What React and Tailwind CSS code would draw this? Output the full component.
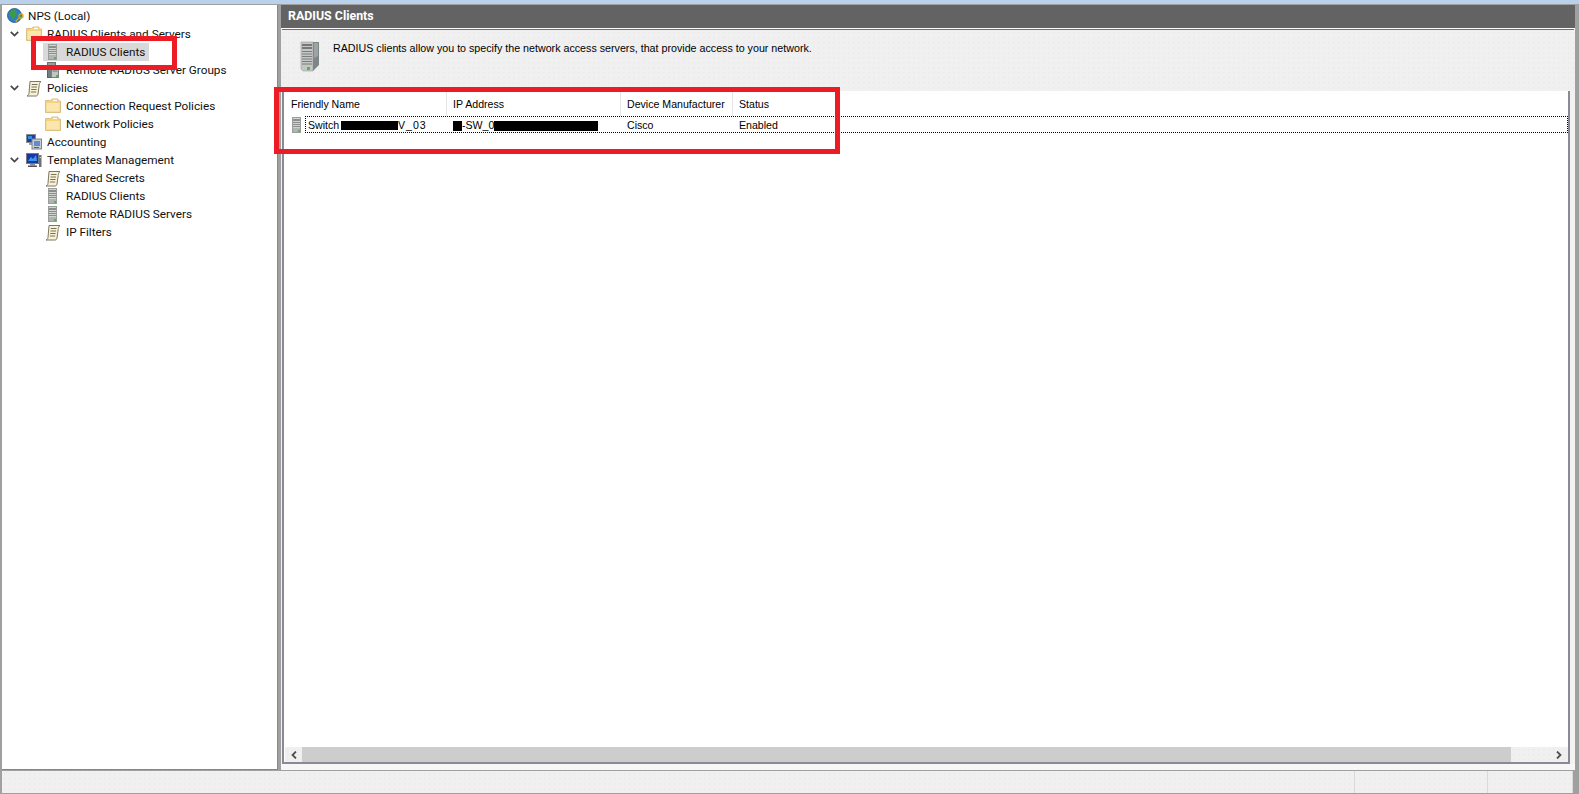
const Chevron = () => (
  <svg width="9" height="6" viewBox="0 0 9 6" className="shrink-0">
    <path d="M0.8 0.8 L4.5 4.5 L8.2 0.8" fill="none" stroke="#454545" strokeWidth="1.7" />
  </svg>
);

const Folder = () => (
  <svg width="16" height="16" viewBox="0 0 16 16" className="shrink-0">
    <path d="M0.5 2.5 H5.5 L7 1 H13 V3 H15.5 V14.5 H0.5 Z" fill="#f4d27e" stroke="#dcc084" strokeWidth="1" />
    <path d="M1.5 5 H14.5 V13.5 H1.5 Z" fill="#fbe7ae" />
    <path d="M8 1.8 H12 V3 H8 Z" fill="#ffffff" />
  </svg>
);

const Scroll = () => (
  <svg width="16" height="17" viewBox="0 0 16 17" className="shrink-0">
    <path d="M4 1.5 H15 C13.6 2.5 13.4 4 13.2 5.5 L12 14 C11.7 15.5 11 16 10 16 H1 C2.4 15.5 2.8 14.5 3 13.5 Z" fill="#f8f1d4" stroke="#7d7862" strokeWidth="1" />
    <path d="M5.8 4.5 H11.5 M5.5 7 H11 M5.2 9.5 H10.6 M4.9 12 H10.2" stroke="#77725e" strokeWidth="1" />
  </svg>
);

const Server = ({ w = 9, h = 16 }) => (
  <svg width={w} height={h} viewBox="0 0 9 16" className="shrink-0" preserveAspectRatio="none">
    <rect x="0.5" y="0.5" width="8" height="15" fill="#d2d4d2" stroke="#9b9d9b" strokeWidth="1" />
    <path d="M1 3 H8" stroke="#5d605f" strokeWidth="1.2" />
    <path d="M1 5.5 H8 M1 7.5 H8 M1 9.5 H8" stroke="#8a8d8c" strokeWidth="1" />
    <rect x="1" y="11" width="7" height="4" fill="#b2b4b3" />
    <rect x="6" y="13" width="2" height="2" fill="#4dbb4a" />
  </svg>
);

const BigServer = () => (
  <svg width="20" height="31" viewBox="0 0 20 31" className="shrink-0">
    <path d="M1 1 H13 V30 H3 L1 28 Z" fill="#c4c7c6" stroke="#9a9d9c" strokeWidth="0.6" />
    <path d="M13 1 H19 V24 L13 30 Z" fill="#7f8686" />
    <path d="M14 2 H18 V15 L14 17 Z" fill="#9ea4a4" />
    <path d="M2 4 H12 M2 7 H12" stroke="#5c5f5e" strokeWidth="1.4" />
    <path d="M2 10.5 H12 M2 13 H12 M2 15.5 H12 M2 18 H12 M2 20.5 H12 M2 23 H12" stroke="#7a7d7c" strokeWidth="1" />
    <rect x="7" y="26" width="3" height="3" fill="#43c23f" />
  </svg>
);

const ServerGroup = () => (
  <svg width="12" height="16" viewBox="0 0 12 16" className="shrink-0">
    <rect x="0.5" y="0.5" width="8" height="6" fill="#9a9c9a" stroke="#6f716f" />
    <rect x="0.5" y="6" width="5" height="9.5" fill="#6f8080" stroke="#5b6262" />
    <rect x="4.5" y="4.5" width="7" height="11" fill="#c4c6c4" stroke="#7e807e" />
    <path d="M5.5 7 H10.5 M5.5 9 H10.5" stroke="#6d706f" />
    <rect x="9" y="13" width="2" height="2" fill="#4dbb4a" />
  </svg>
);

const Globe = () => (
  <svg width="17" height="17" viewBox="0 0 17 17" className="shrink-0">
    <circle cx="7.5" cy="7.5" r="7" fill="#2f7fc4" stroke="#1d4f82" strokeWidth="0.8" />
    <path d="M3 3.5 C5 2 7 1.5 9 2 L8 5 L10 6 L8 9 L6 12 L4.5 9 L2 7 Z" fill="#3f9a46" />
    <path d="M11 9 L13.5 7 L14 10 L12 12 Z" fill="#3f9a46" />
    <circle cx="14" cy="8" r="2" fill="none" stroke="#c9a227" strokeWidth="1.3" />
    <path d="M12.7 9.5 L8.5 13.5 M10 13.5 L9 12.5" stroke="#c9a227" strokeWidth="1.3" />
  </svg>
);

const Accounting = () => (
  <svg width="16" height="16" viewBox="0 0 16 16" className="shrink-0">
    <rect x="0.5" y="0.5" width="9" height="8" fill="#1c3fb0" stroke="#8a8c92" />
    <rect x="2" y="2" width="4" height="3" fill="#2f8fe0" />
    <rect x="3" y="9" width="5" height="2" fill="#9ea0a6" />
    <rect x="6" y="5" width="9.5" height="10" fill="#c9ccd2" stroke="#7f828a" />
    <rect x="8" y="7" width="6" height="5" fill="#5b8fd0" />
    <rect x="8" y="13" width="5" height="1" fill="#5d6068" />
  </svg>
);

const Templates = () => (
  <svg width="16" height="16" viewBox="0 0 16 16" className="shrink-0">
    <rect x="0.5" y="1.5" width="12" height="10" fill="#1a35a8" stroke="#757982" />
    <path d="M2 9 L5 5 L7 7 L10 3 L11 9 Z" fill="#3a9ae8" />
    <rect x="4" y="12" width="5" height="1.5" fill="#8a8d94" />
    <rect x="2" y="13.5" width="9" height="1.5" fill="#4f5259" />
    <rect x="13" y="3" width="2.5" height="12" fill="#6d7078" />
    <rect x="13.7" y="5" width="1.2" height="1" fill="#d8dade" />
  </svg>
);

const Row = ({ level, open, icon, iconPad, label, selected }) => {
  const pad = iconPad === 3 ? "pl-[3px]" : iconPad === 2 ? "pl-[2px]" : "";
  return (
    <div className="flex h-[18px] items-center">
      {level === 0 && <div className="w-[3px] shrink-0" />}
      {level === 1 && (
        <div className="flex w-[22px] shrink-0 items-center pl-[6px]">{open && <Chevron />}</div>
      )}
      {level === 2 && <div className={selected ? "w-[39px] shrink-0" : "w-[41px] shrink-0"} />}
      {selected ? (
        <div className="flex h-[18px] items-center bg-[#d9d9d9] pl-[2px] pr-[4px]">
          <div className={`flex w-[21px] shrink-0 ${pad}`}>{icon}</div>
          <span>{label}</span>
        </div>
      ) : (
        <>
          <div className={`flex w-[21px] shrink-0 ${pad}`}>{icon}</div>
          <span>{label}</span>
        </>
      )}
    </div>
  );
};

const dots = "bg-[radial-gradient(#ebebeb_1px,transparent_1px)] bg-[length:5px_5px]";

export default function App() {
  return (
    <div className="relative flex h-[794px] w-[1579px] flex-col overflow-hidden bg-[#a0a0a0]" style={{ fontFamily: 'Roboto, sans-serif' }}>
      <div className="h-[4px] shrink-0 bg-[#b9d1ea]" />
      <div className="flex h-[767px] shrink-0 gap-[3px] bg-[#a0a0a0] pb-[1px] pl-[2px] pr-[4px] pt-[1px]">
        {/* Tree */}
        <div className="w-[276px] shrink-0 border-b border-r border-[#828790] bg-white pl-[2px] pt-[2px] text-[11.75px] leading-[18px] text-[#111]">
          <Row level={0} icon={<Globe />} label="NPS (Local)" />
          <Row level={1} open icon={<Folder />} label="RADIUS Clients and Servers" />
          <Row level={2} selected iconPad={3} icon={<Server />} label="RADIUS Clients" />
          <Row level={2} iconPad={2} icon={<ServerGroup />} label="Remote RADIUS Server Groups" />
          <Row level={1} open icon={<Scroll />} label="Policies" />
          <Row level={2} icon={<Folder />} label="Connection Request Policies" />
          <Row level={2} icon={<Folder />} label="Network Policies" />
          <Row level={1} icon={<Accounting />} label="Accounting" />
          <Row level={1} open icon={<Templates />} label="Templates Management" />
          <Row level={2} icon={<Scroll />} label="Shared Secrets" />
          <Row level={2} iconPad={3} icon={<Server />} label="RADIUS Clients" />
          <Row level={2} iconPad={3} icon={<Server />} label="Remote RADIUS Servers" />
          <Row level={2} icon={<Scroll />} label="IP Filters" />
        </div>
        {/* Right pane */}
        <div className="flex min-w-0 flex-1 flex-col bg-[#f2f2f2]">
          <div className="flex h-[23px] shrink-0 items-center bg-[#636363] pl-[7px] text-[12.4px] font-bold text-white">
            RADIUS Clients
          </div>
          <div className="h-[1px] shrink-0 bg-white" />
          <div className="mx-[1px] h-[1px] shrink-0 bg-[#6e6e6e]" />
          <div className={`flex h-[61px] shrink-0 bg-[#f0f0f0] pl-[19px] pt-[11px] ${dots}`}>
            <BigServer />
            <div className="ml-[13px] text-[10.7px] leading-[14px] text-black" style={{ fontFamily: '"Liberation Sans", sans-serif' }}>
              RADIUS clients allow you to specify the network access servers, that provide access to your network.
            </div>
          </div>
          <div className="ml-[1px] mr-[5px] flex min-h-0 flex-1 flex-col border-x-2 border-b-2 border-[#8a8a96] bg-white" style={{ fontFamily: '"Liberation Sans", sans-serif' }}>
            <div className="flex h-[25px] shrink-0 items-center text-[10.6px] text-black">
              <div className="flex h-full w-[163px] shrink-0 items-center border-r border-[#e5e5e5] pl-[7px] pt-[2px]">Friendly Name</div>
              <div className="flex h-full w-[174px] shrink-0 items-center border-r border-[#e5e5e5] pl-[6px] pt-[2px]">IP Address</div>
              <div className="flex h-full w-[112px] shrink-0 items-center border-r border-[#e5e5e5] pl-[6px] pt-[2px]">Device Manufacturer</div>
              <div className="flex h-full items-center pl-[6px] pt-[2px]">Status</div>
            </div>
            <div className="flex h-[17px] shrink-0 items-center text-[10.6px] text-black">
              <div className="flex w-[21px] shrink-0 justify-center pl-[3px]"><Server w={9} h={16} /></div>
              <div className="flex h-full flex-1 items-center border border-dotted border-black pt-[2px]">
                <div className="flex w-[141px] shrink-0 items-center">
                  <span className="w-[35px] shrink-0 pl-[2px]">Switch</span>
                  <span className="inline-block h-[9px] w-[57px] shrink-0 bg-black" />
                  <span className="tracking-[1px]">V_03</span>
                </div>
                <div className="flex w-[174px] shrink-0 items-center pl-[6px]">
                  <span className="inline-block h-[10px] w-[9px] bg-black" />
                  <span>-SW_0</span>
                  <span className="inline-block h-[10px] w-[104px] bg-black" />
                </div>
                <div className="w-[112px] shrink-0 pl-[6px]">Cisco</div>
                <div className="pl-[6px]">Enabled</div>
              </div>
            </div>
            <div className="flex-1" />
            <div className="ml-[1px] flex h-[15px] shrink-0 items-stretch bg-[#f0f0f0]">
              <div className={`flex w-[17px] shrink-0 items-center justify-center ${dots}`}>
                <svg width="6" height="8" viewBox="0 0 6 8"><path d="M5 0.5 L1.5 4 L5 7.5" fill="none" stroke="#505050" strokeWidth="1.8" /></svg>
              </div>
              <div className="w-[1209px] shrink-0 bg-[#cdcdcd]" />
              <div className={`flex flex-1 items-center justify-end pr-[6px] ${dots}`}>
                <svg width="6" height="8" viewBox="0 0 6 8"><path d="M1 0.5 L4.5 4 L1 7.5" fill="none" stroke="#505050" strokeWidth="1.8" /></svg>
              </div>
            </div>
          </div>
          <div className="h-[6px] shrink-0 bg-[#f7f7f7]" />
        </div>
      </div>
      {/* Status bar */}
      <div className={`ml-[2px] mr-[6px] flex h-[22px] shrink-0 bg-[#f0f0f0] ${dots}`}>
        <div className="w-[1353px] shrink-0 border-r border-[#d9d9d9]" />
        <div className="w-[133px] shrink-0 border-r border-[#d9d9d9]" />
        <div className="flex-1 border-r border-[#d9d9d9]" />
      </div>
      {/* Red annotation rectangles */}
      <div className="absolute left-[31px] top-[36px] h-[34px] w-[146px] border-[5px] border-[#ed1c24]" />
      <div className="absolute left-[274px] top-[87px] h-[67px] w-[566px] border-[5px] border-[#ed1c24]" />
    </div>
  );
}
